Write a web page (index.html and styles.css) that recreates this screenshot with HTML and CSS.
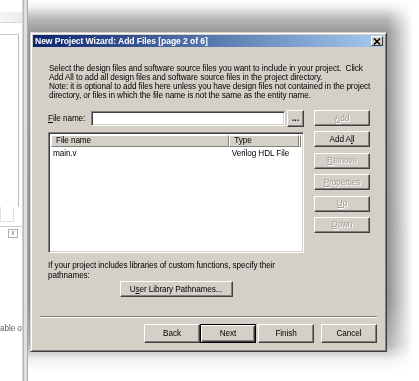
FILE: index.html
```html
<!DOCTYPE html>
<html lang="en">
<head>
    <meta charset="UTF-8">
    <title>New Project Wizard: Add Files</title>
    <link rel="stylesheet" href="styles.css">
</head>
<body>
    <div class="screen">
        <!-- painel lateral do Quartus, meio apagado -->
        <div class="side-panel">
            <div class="side-head"></div>
            <div class="side-list"></div>
            <div class="side-tabs"></div>
            <div class="side-bar"><span class="side-close">x</span></div>
            <div class="side-text">able o</div>
        </div>

        <!-- janela principal atras do wizard -->
        <div class="main-window">
            <div class="dialog">
                <div class="title-bar">
                    <span class="title-text">New Project Wizard: Add Files [page 2 of 6]</span>
                    <span class="close-btn">
                        <svg width="8" height="7" viewBox="0 0 8 7"><path d="M1 0.5 L7 6.5 M7 0.5 L1 6.5" stroke="#000" stroke-width="1.6"/></svg>
                    </span>
                </div>

                <div class="dialog-body">
                    <p class="intro">
                        Select the design files and software source files you want to include in your project.&nbsp; Click<br>
                        Add All to add all design files and software source files in the project directory.<br>
                        Note: it is optional to add files here unless you have design files not contained in the project<br>
                        directory, or files in which the file name is not the same as the entity name.
                    </p>

                    <div class="files">
                        <div class="files-left">
                            <div class="file-row">
                                <label class="file-label"><u>F</u>ile name:</label>
                                <div class="file-input"></div>
                                <button class="btn browse">...</button>
                            </div>
                            <div class="file-list">
                                <div class="list-head">
                                    <div class="col col-name">File name</div>
                                    <div class="col col-type">Type</div>
                                    <div class="col col-rest"></div>
                                </div>
                                <div class="list-row">
                                    <div class="cell col-name">main.v</div>
                                    <div class="cell col-type">Verilog HDL File</div>
                                </div>
                            </div>
                        </div>

                        <div class="files-right">
                            <button class="btn side disabled"><u>A</u>dd</button>
                            <button class="btn side">Add A<u>l</u>l</button>
                            <button class="btn side disabled"><u>R</u>emove</button>
                            <button class="btn side disabled"><u>P</u>roperties</button>
                            <button class="btn side disabled"><u>U</u>p</button>
                            <button class="btn side disabled"><u>D</u>own</button>
                        </div>
                    </div>

                    <p class="libs">If your project includes libraries of custom functions, specify their<br>pathnames:</p>
                    <div class="libs-row">
                        <button class="btn libs-btn">U<u>s</u>er Library Pathnames...</button>
                    </div>

                    <div class="separator"></div>

                    <div class="footer">
                        <button class="btn foot">Back</button>
                        <button class="btn foot default">Next</button>
                        <button class="btn foot finish">Finish</button>
                        <button class="btn foot cancel">Cancel</button>
                    </div>
                </div>
            </div>
        </div>
    </div>
</body>
</html>
```

FILE: styles.css
```css
/* Base */
body {
    margin: 0;
    padding: 0;
    background: #fff;
    font-family: 'Liberation Sans', Arial, sans-serif;
    font-size: 8.2px;
    letter-spacing: -0.1px;
    color: #000;
}

.screen {
    width: 419px;
    height: 381px;
    display: flex;
    overflow: hidden;
    background: #fff;
}

/* Painel lateral */
.side-panel {
    width: 22px;
    flex: none;
    display: flex;
    flex-direction: column;
    border-right: 1px solid #c9c9c9;
    opacity: 0.8;
}

.side-head {
    height: 10px;
    margin-top: 12px;
    background: linear-gradient(to right, #f6f6f6, #e6e6e6);
    border-bottom: 1px solid #cfcfcf;
}

.side-list {
    height: 172px;
    margin-top: 11px;
    border-top: 1px solid #bdbdbd;
    border-right: 1px solid #a8a8a8;
    width: 18px;
}

.side-tabs {
    height: 14px;
    width: 12px;
    border: 1px solid #d8d8d8;
    border-top: none;
}

.side-bar {
    margin-top: 4px;
    height: 9px;
    display: flex;
    justify-content: flex-end;
    padding-right: 4px;
    border-top: 1px solid #bcbcbc;
    padding-top: 2px;
}

.side-close {
    width: 8px;
    height: 7px;
    border: 1px solid #999;
    font-size: 7px;
    line-height: 6px;
    text-align: center;
    color: #555;
}

.side-text {
    margin-top: 86px;
    white-space: nowrap;
    color: #333;
}

/* Janela de fundo */
.main-window {
    flex: 1;
    padding: 32px 0 0 6px;
    background: linear-gradient(to bottom, #fff 0, #f4f4f4 6px, #b4b4b4 20px, #999 32px, #8e8e8e 300px, #b0b0b0 345px, #f2f2f2 360px, #fff 372px);
    -webkit-mask-image: linear-gradient(to right, #000 0, #000 calc(100% - 32px), transparent calc(100% - 6px));
    mask-image: linear-gradient(to right, #000 0, #000 calc(100% - 32px), transparent calc(100% - 6px));
    border-left: 1px solid #b8b8b8;
    box-shadow: inset 3px 0 0 #e0e0e0, inset 4px 0 0 #a9a9a9;
}

/* Dialog */
.dialog {
    width: 357px;
    height: 320px;
    box-sizing: border-box;
    background: #d4d0c8;
    border: 1px solid;
    border-color: #d4d0c8 #404040 #404040 #d4d0c8;
    box-shadow: inset 1px 1px #fff, inset -1px -1px #808080;
    display: flex;
    flex-direction: column;
    padding: 2px;
}

.title-bar {
    height: 12px;
    background: linear-gradient(to right, #0a246a, #a6caf0);
    display: flex;
    align-items: center;
    justify-content: space-between;
    padding: 0 1px 0 2px;
}

.title-text {
    color: #fff;
    font-weight: bold;
    font-size: 8.6px;
    letter-spacing: -0.08px;
    white-space: nowrap;
}

.close-btn {
    width: 10px;
    height: 8px;
    background: #d4d0c8;
    border: 1px solid;
    border-color: #fff #404040 #404040 #fff;
    display: flex;
    align-items: center;
    justify-content: center;
}

.dialog-body {
    flex: 1;
    padding: 17px 14px 0 15px;
}

.intro {
    margin: 0;
    line-height: 9px;
    white-space: nowrap;
    padding-left: 1px;
}

/* Area de arquivos */
.files {
    display: grid;
    grid-template-columns: 256px 56px;
    column-gap: 10px;
    margin-top: 10px;
}

.file-row {
    display: flex;
    align-items: center;
    height: 17px;
}

.file-label {
    width: 43px;
    flex: none;
}

.file-input {
    flex: 1;
    height: 15px;
    box-sizing: border-box;
    background: #fff;
    border: 1px solid;
    border-color: #808080 #fff #fff #808080;
    box-shadow: inset 1px 1px #404040, inset -1px -1px #d4d0c8;
    margin-right: 2px;
}

.btn {
    font-family: 'Liberation Sans', Arial, sans-serif;
    font-size: 8.2px;
    letter-spacing: -0.1px;
    color: #000;
    background: #d4d0c8;
    border: 1px solid;
    border-color: #fff #404040 #404040 #fff;
    box-shadow: inset -1px -1px #808080;
    padding: 0;
    margin: 0;
    box-sizing: border-box;
}

.btn.browse {
    width: 17px;
    height: 17px;
    font-weight: bold;
    letter-spacing: 0;
    line-height: 10px;
}

.btn.disabled {
    color: #a19e97;
    text-shadow: 1px 1px #fff;
}

.file-list {
    margin-top: 5px;
    height: 121px;
    box-sizing: border-box;
    background: #fff;
    border: 1px solid;
    border-color: #808080 #fff #fff #808080;
    box-shadow: inset 1px 1px #404040, inset -1px -1px #d4d0c8;
    padding: 2px;
}

.list-head {
    display: flex;
    height: 12px;
}

.col {
    box-sizing: border-box;
    background: #d4d0c8;
    border: 1px solid;
    border-color: #fff #808080 #808080 #fff;
    line-height: 10px;
    padding-left: 4px;
}

.col-name {
    width: 179px;
}

.col-type {
    width: 70px;
}

.col-rest {
    flex: 1;
    padding: 0;
}

.list-row {
    display: flex;
    height: 12px;
    line-height: 12px;
    margin-top: 1px;
}

.cell {
    padding-left: 2px;
}

.files-right {
    display: flex;
    flex-direction: column;
    gap: 5.4px;
}

.btn.side {
    height: 16px;
    width: 56px;
}

/* Bibliotecas */
.libs {
    margin: 8px 0 0;
    line-height: 10px;
    white-space: nowrap;
}

.libs-row {
    width: 256px;
    display: flex;
    justify-content: center;
}

.btn.libs-btn {
    width: 113px;
    height: 16px;
}

.separator {
    margin: 19px -7px 0 -8px;
    border-top: 1px solid #808080;
    border-bottom: 1px solid #fff;
}

/* Botoes de baixo */
.footer {
    display: flex;
    justify-content: flex-end;
    margin: 6px -7px 0 0;
}

.btn.foot {
    width: 56px;
    height: 19px;
}

.btn.default {
    border: 1px solid #000;
    box-shadow: inset 1px 1px #fff, inset -1px -1px #404040, inset -2px -2px #808080;
}

.btn.finish {
    margin-left: 2px;
}

.btn.cancel {
    margin-left: 7px;
}
```
